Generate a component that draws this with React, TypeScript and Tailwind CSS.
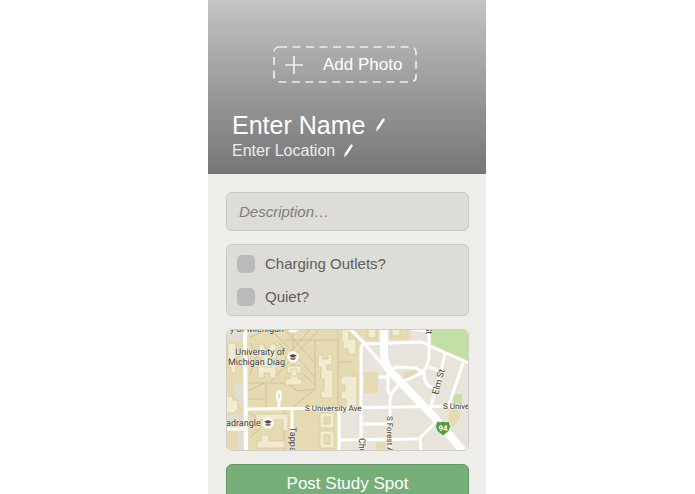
import { useState } from "react";

function PencilIcon() {
  return (
    <svg className="h-3.5 w-2.5 shrink-0" viewBox="0 0 10 14" fill="#fff" aria-hidden="true">
      <path d="M8 .2Q9.900.1 9.800 1.900L4.200 10.400 1 13.400 1.900 9.200Z" />
    </svg>
  );
}

function CampusPin({ x, y }: { x: number; y: number }) {
  return (
    <g transform={`translate(${x} ${y})`}>
      <circle r="5.8" fill="#fffdf6" />
      <path d="M-4-1.200 0-3 4-1.200 0 .8Z" fill="#5f443d" />
      <path d="M-2.500.2V2.200Q0 3.700 2.500 2.200V.2L0 1.300Z" fill="#8a6259" />
    </g>
  );
}

function CampusMap() {
  return (
    <svg
      className="block w-full"
      viewBox="1 1 241 120"
      role="img"
      aria-label="Map of the area around S University Ave"
    >
      <rect width="243" height="122" fill="#e8e4db" />

      {/* campus ground */}
      <path d="M0 0H126L136 13V79H113V122H0Z" fill="#e6dab3" />
      <g fill="#e6dab3">
        <path d="M127 0H153V12H140Z" />
        <path d="M163 0H184V11H163Z" />
        <path d="M138 43H152V64H138Z" />
        <path d="M178 43 193 40 186 47 177 50Z" />
        <path d="M224 79H234V90L227 98 222 92Z" />
        <path d="M150 113H160V122H150Z" />
      </g>
      <path d="M205 0H243V33L205 17Z" fill="#c4dfa6" />
      <path d="M227 65H236V74H227Z" fill="#c9dfa8" />
      <path d="M0 0H17V13H0ZM9 54H18V76H9ZM0 85H18V98H0ZM11 103H18V122H11Z" fill="#e2ddd3" />

      {/* footpaths */}
      <g fill="none" stroke="#cfc19a" strokeWidth="1">
        <path d="M24 8 44 0 66 22 90 50M92 2 67 28 44 54M58 0 89 34M84 0 56 34M67 0V38M60 11H112M89 11V60L66 79M112 0V79M112 33H126M22 54H60L72 62 89 60M22 62 38 54M40 56V79M24 14 31 26 24 46M53 14 60 22M58 82V122M24 84 34 92M24 108 34 100M76 44 89 56M22 70H38" />
      </g>

      {/* buildings */}
      <g fill="#f1ebd2" stroke="#dacd9f" strokeWidth="1">
        <path d="M33 15H38V19H44V15H50V49H44V44H38V49H32V36H35V29H33Z" />
        <path d="M36 26H46V38H36Z" />
        <path d="M61 37H75V44H72V50H76V56H59V50H64V44H61Z" />
        <path d="M65 40H71V47H65Z" />
        <path d="M0 67H7V71H12V80L8 84H0Z" />
        <path d="M92 26H97V30H102V25H106V36H101V41H107V69H95V62H98V50H95V38H92Z" />
        <path d="M94 84H108V99H94ZM98 88V95H104V88Z" fillRule="evenodd" />
        <path d="M94 102H108V119H94ZM98 106V115H104V106Z" fillRule="evenodd" />
        <path d="M94 73H97V78H94ZM30 85H62V102H57V91H34V100H30Z" />
        <path d="M35 106H43V112H59V119H31V112H35Z" />
        <path d="M116 0H123V10H130V25H122V20H117V12H115Z" />
        <path d="M115 47H131V77H120V70H115V62H119V56H115Z" />
        <path d="M2 14H10V44H5V38H2ZM142 0H150V9H142ZM166 0H174V7H166Z" />
      </g>

      {/* streets */}
      <g fill="none" stroke="#fff" strokeWidth="3" strokeLinejoin="round">
        <path d="M19 0 20 122" strokeWidth="4" />
        <path d="M20 80 110 79 243 77" />
        <path d="M53 79V67" />
        <path d="M66 80V122M113 80V122M0 100H19" />
        <path d="M124 0 138 14 160 40" />
        <path d="M135 122V19Q135 15 140 15L195 13 243 34" />
        <path d="M203 0V28Q202 39 194 45L178 52Q166 60 164 70V122" />
        <path d="M153 48H162V62L165 66M161 47 169 38 190 39 197 44" />
        <path d="M219 25 215 42 205 77M203 38 215 42M198 43Q198 58 208 59" />
        <path d="M237 34 223 76M137 95H163M113 111 192 110M195 122 194 109 211 92M185 0 203 2" />
      </g>
      <ellipse cx="53" cy="67" rx="3" ry="6" fill="#fff" />
      <ellipse cx="53" cy="67" rx="1" ry="3" fill="#e6dab3" />
      <path d="M158 0V24Q158 36 166 44L208 88 237 122" fill="none" stroke="#fff" strokeWidth="8" />

      <CampusPin x={67} y={-2} />
      <CampusPin x={67} y={28} />
      <CampusPin x={42} y={94} />

      <g
        className="font-[Roboto,sans-serif] text-[9px]"
        fill="#403e39"
        stroke="#f6f1e1"
        strokeWidth="1"
        paintOrder="stroke"
        textRendering="geometricPrecision"
      >
        <text x="4" y="3">y of Michigan</text>
        <text x="59" y="26" textAnchor="end">University of</text>
        <text x="59" y="36" textAnchor="end">Michigan Diag</text>
        <text x="79" y="82" className="text-[8px]">S University Ave</text>
        <text x="0" y="97">adrangle</text>
        <text x="217" y="80" className="text-[8px]">S University</text>
        <text transform="translate(64 98) rotate(90)">Tappan</text>
        <text transform="translate(133 109) rotate(90)">Church</text>
        <text transform="translate(161 87) rotate(90)" className="text-[8px]">S Forest Ave</text>
        <text transform="translate(212 66) rotate(-75)">Elm St</text>
        <text transform="translate(200 -3) rotate(90)">St</text>
      </g>

      {/* interstate shield */}
      <path d="M211 92Q214 94 217 92 220 94 223 92 226 98 223 102L217 107 211 102Q208 98 211 92Z" fill="#4f9a45" stroke="#e9f1e0" strokeWidth="1" />
      <text x="217" y="102" textAnchor="middle" fill="#fff" textRendering="geometricPrecision" className="font-[Roboto,sans-serif] text-[8px] font-bold">94</text>
    </svg>
  );
}

const FEATURES = ["Charging Outlets?", "Quiet?"];

export default function App() {
  const [name, setName] = useState("");
  const [location, setLocation] = useState("");
  const [description, setDescription] = useState("");
  const [checked, setChecked] = useState<string[]>([]);

  function toggle(feature: string) {
    setChecked((prev) => (prev.includes(feature) ? prev.filter((f) => f !== feature) : [...prev, feature]));
  }

  return (
    <div className="min-h-screen bg-white pr-px font-['Liberation_Sans',Arial,sans-serif]">
      <form className="mx-auto w-full max-w-[278px] bg-[#eeede9]" onSubmit={(e) => e.preventDefault()}>
        <header className="bg-linear-to-b from-[#c4c4c4] to-[#767676] pt-[46px] pr-7 pb-[13px] pl-6 text-white">
          <button type="button" className="relative mx-auto flex h-[37px] w-36 items-center gap-5 px-3 text-[17px]">
            <svg className="absolute inset-0 h-full w-full" viewBox="0 0 144 37" fill="none" aria-hidden="true">
              <rect x="1" y="1" width="142" height="35" rx="5" stroke="#ededed" strokeWidth="1.700" strokeDasharray="8 5.500" />
            </svg>
            <svg className="h-[18px] w-[18px] shrink-0" viewBox="0 0 18 18" stroke="#f0f0f0" strokeWidth="1.700" aria-hidden="true">
              <path d="M9 0V18M0 9H18" />
            </svg>
            <span className="whitespace-nowrap">Add Photo</span>
          </button>

          <div className="mt-7 flex h-7 items-center gap-2.5">
            <input
              aria-label="Name"
              className="field-sizing-content max-w-full bg-transparent text-[25px] leading-7 outline-none placeholder:text-white placeholder:opacity-100"
              placeholder="Enter Name"
              value={name}
              onChange={(e) => setName(e.target.value)}
            />
            <PencilIcon />
          </div>
          <div className="mt-0.5 flex h-5 items-center gap-2">
            <input
              aria-label="Location"
              className="field-sizing-content max-w-full bg-transparent text-base leading-5 outline-none placeholder:text-[#ececec] placeholder:opacity-100"
              placeholder="Enter Location"
              value={location}
              onChange={(e) => setLocation(e.target.value)}
            />
            <PencilIcon />
          </div>
        </header>

        <div className="flex flex-col gap-[13px] pt-[18px] pr-[17px] pl-[18px]">
          <input
            aria-label="Description"
            className="h-[39px] w-full rounded-md border border-[#c9c8c4] bg-[#dddcd7] px-3 text-[15px] outline-none placeholder:text-[#7c7c79] placeholder:italic placeholder:opacity-100"
            placeholder="Description…"
            value={description}
            onChange={(e) => setDescription(e.target.value)}
          />

          <div className="flex flex-col gap-[13px] rounded-md border border-[#c9c8c4] bg-[#dddcd7] px-2.5 pt-[9px] pb-2">
            {FEATURES.map((feature) => (
              <label key={feature} className="flex h-5 items-center gap-2.5 text-[15px] text-[#5f5f5c]">
                <input
                  type="checkbox"
                  className="h-[18px] w-[18px] shrink-0 appearance-none rounded-[5px] bg-[#bababa] checked:bg-[#75ae78]"
                  checked={checked.includes(feature)}
                  onChange={() => toggle(feature)}
                />
                {feature}
              </label>
            ))}
          </div>

          <div className="overflow-hidden rounded-md border border-[#d0cdc5]">
            <CampusMap />
          </div>

          <button type="submit" className="h-[39px] rounded-md border border-[#639a67] bg-[#75ae78] text-[17px] text-white">
            Post Study Spot
          </button>
        </div>
      </form>
    </div>
  );
}
